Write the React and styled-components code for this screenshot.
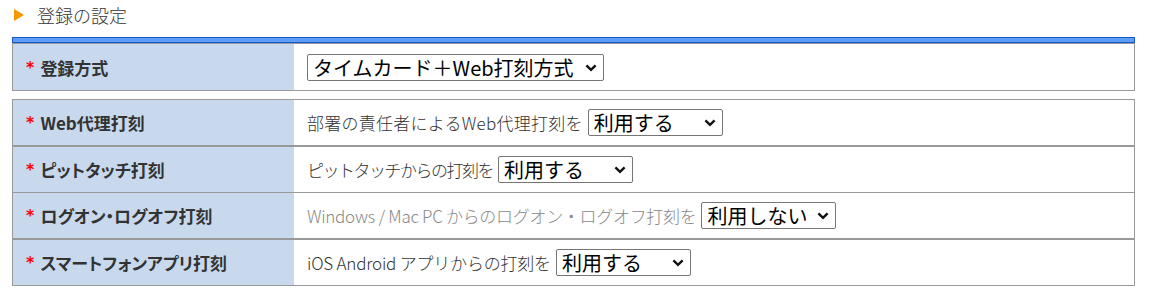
import React from 'react';
import styled, { createGlobalStyle } from 'styled-components';

const GlobalStyle = createGlobalStyle`
    body {
        margin: 0;
        background: #fff;
        font-family: "Noto Sans CJK JP", "Noto Sans", sans-serif;
        color: #333;
    }
`;

const Page = styled.div`
    padding: 0 16px 0 12px;
    width: 1123px;
`;

const Title = styled.div`
    display: flex;
    align-items: center;
    gap: 13px;
    height: 30px;
    padding-left: 2px;
    font-size: 18px;
    font-weight: 300;
    color: #333;
`;

const Triangle = styled.span`
    width: 0;
    height: 0;
    border-top: 6.5px solid transparent;
    border-bottom: 6.5px solid transparent;
    border-left: 10px solid #f39800;
`;

const BlueBar = styled.div`
    margin-top: 7px;
    height: 4px;
    background: #5f9ef2;
    border: 1px solid #1558d6;
`;

const Table = styled.div`
    border: 1px solid #999;
    margin-bottom: ${p => p.$gap || 0}px;
`;

const Row = styled.div`
    display: grid;
    grid-template-columns: 281px 1fr;
    height: ${p => p.$h}px;
    border-top: ${p => (p.$sep ? `${p.$sep}px solid #999` : 'none')};
`;

const Label = styled.div`
    display: flex;
    align-items: center;
    background: #c8d9ee;
    padding-left: 13px;
    font-size: 17px;
    font-weight: 700;
    color: #333;
    font-feature-settings: "palt";
`;

const Star = styled.span`
    color: #f00;
    font-family: "DejaVu Sans", sans-serif;
    font-size: 16px;
    font-weight: 700;
    margin-right: 6px;
`;

const Value = styled.div`
    display: flex;
    align-items: center;
    gap: 5px;
    padding-left: 13px;
    font-size: 17px;
    font-weight: 300;
    color: ${p => (p.$muted ? '#888' : '#333')};
`;

const Hint = styled.span`
    letter-spacing: ${p => p.$spacing || 0}px;
`;

const SelectWrap = styled.span`
    position: relative;
    display: inline-flex;
    width: ${p => p.$w}px;
    height: 27px;
`;

const Select = styled.select`
    appearance: none;
    width: 100%;
    height: 100%;
    font-family: "Noto Sans CJK JP", sans-serif;
    font-size: 20px;
    line-height: 25px;
    color: #000;
    background: #fff;
    border: 1px solid #767676;
    border-radius: 2px;
    padding: 0 20px 0 5px;
`;

const Chevron = styled.svg`
    position: absolute;
    right: 7px;
    top: 10px;
    pointer-events: none;
`;

function Dropdown({ w, value, options }) {
    return (
        <SelectWrap $w={w}>
            <Select defaultValue={value}>
                {options.map(o => <option key={o}>{o}</option>)}
            </Select>
            <Chevron width="12" height="8" viewBox="0 0 12 8">
                <path d="M1.4 1.4 L6 5.8 L10.6 1.4" fill="none" stroke="#111" strokeWidth="2.4" />
            </Chevron>
        </SelectWrap>
    );
}

const useOptions = ['利用する', '利用しない'];

const rows = [
    { label: 'Web代理打刻', text: '部署の責任者によるWeb代理打刻を', value: '利用する', sep: 0, spacing: 0.25 },
    { label: 'ピットタッチ打刻', text: 'ピットタッチからの打刻を', value: '利用する', sep: 2, spacing: -1.5 },
    { label: 'ログオン・ログオフ打刻', text: 'Windows / Mac PC からのログオン・ログオフ打刻を', value: '利用しない', sep: 1, spacing: -0.3, muted: true },
    { label: 'スマートフォンアプリ打刻', text: 'iOS Android アプリからの打刻を', value: '利用する', sep: 2, spacing: -0.2 },
];

export default function App() {
    return (
        <Page>
            <GlobalStyle />
            <Title>
                <Triangle />
                登録の設定
            </Title>
            <BlueBar />
            <Table $gap={8}>
                <Row $h={46}>
                    <Label><Star>*</Star>登録方式</Label>
                    <Value>
                        <Dropdown w={297} value="タイムカード＋Web打刻方式" options={['タイムカード＋Web打刻方式', 'Web打刻方式']} />
                    </Value>
                </Row>
            </Table>
            <Table>
                {rows.map(r => (
                    <Row key={r.label} $h={45} $sep={r.sep}>
                        <Label><Star>*</Star>{r.label}</Label>
                        <Value $muted={r.muted}>
                            <Hint $spacing={r.spacing}>{r.text}</Hint>
                            <Dropdown w={135} value={r.value} options={useOptions} />
                        </Value>
                    </Row>
                ))}
            </Table>
        </Page>
    );
}
